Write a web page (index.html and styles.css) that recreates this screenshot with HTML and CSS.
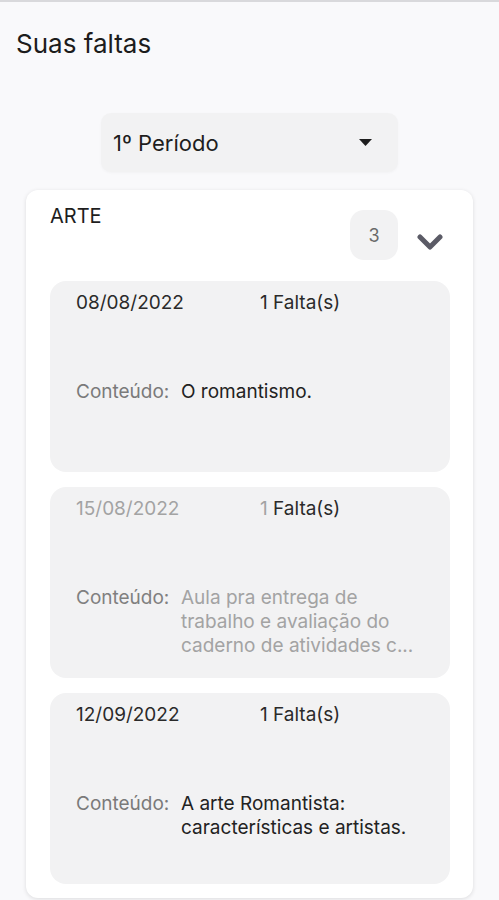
FILE: index.html
```html
<!DOCTYPE html>
<html lang="pt-BR">
<head>
    <meta charset="UTF-8">
    <meta name="viewport" content="width=device-width, initial-scale=1.0">
    <title>Suas faltas</title>
    <link rel="stylesheet" href="styles.css">
</head>
<body>
<div class="topbar"></div>
<h1 class="title">Suas faltas</h1>

<div class="select-wrap">
    <div class="select">
        <span>1º Período</span>
        <svg class="caret" width="13" height="7" viewBox="0 0 13 7"><path d="M0 0 L13 0 L6.5 7 Z" fill="#1e1e1e"/></svg>
    </div>
</div>

<div class="card">
    <div class="card-head">
        <div class="subject">ARTE</div>
        <div class="badge">3</div>
        <svg class="chevron" width="26" height="17" viewBox="0 0 26 17"><polyline points="3,3 13,13 23,3" fill="none" stroke="#5b5b66" stroke-width="5" stroke-linecap="round" stroke-linejoin="round"/></svg>
    </div>

    <div class="item">
        <div class="item-top">
            <span class="date">08/08/2022</span>
            <span class="count">1 Falta(s)</span>
        </div>
        <div class="content">
            <span class="label">Conteúdo:</span>
            <span class="value">O romantismo.</span>
        </div>
    </div>

    <div class="item fading">
        <div class="item-top">
            <span class="date">15/08/2022</span>
            <span class="count"><span class="num">1</span> Falta(s)</span>
        </div>
        <div class="content">
            <span class="label">Conteúdo:</span>
            <span class="value">Aula pra entrega de trabalho e avaliação do caderno de atividades c...</span>
        </div>
    </div>

    <div class="item">
        <div class="item-top">
            <span class="date">12/09/2022</span>
            <span class="count">1 Falta(s)</span>
        </div>
        <div class="content">
            <span class="label">Conteúdo:</span>
            <span class="value">A arte Romantista: características e artistas.</span>
        </div>
    </div>
</div>
</body>
</html>
```

FILE: styles.css
```css
body {
    margin: 0;
    background-color: #f9f9fb;
    font-family: Inter, "Noto Sans", sans-serif;
    color: #222;
    height: 900px;
    overflow: hidden;
}

.topbar {
    height: 2px;
    background-color: #d9d9dc;
}

.title {
    margin: 27px 0 0 16px;
    font-size: 26px;
    font-weight: 400;
    line-height: 30px;
    color: #1c1c1c;
}

.select-wrap {
    display: flex;
    justify-content: center;
    margin-top: 54px;
}

.select {
    width: 297px;
    height: 59px;
    box-sizing: border-box;
    padding: 0 26px 0 12px;
    display: flex;
    align-items: center;
    justify-content: space-between;
    background-color: #f2f2f3;
    border-radius: 10px;
    box-shadow: 0 1px 3px rgba(0, 0, 0, 0.03);
    font-size: 22px;
    color: #1e1e1e;
}

.card {
    margin: 18px 26px 0;
    padding: 14px 23px 14px 24px;
    background-color: #fff;
    border-radius: 12px;
    box-shadow: 0 1px 4px rgba(0, 0, 0, 0.12);
}

.card-head {
    display: flex;
    align-items: flex-start;
    height: 77px;
}

.subject {
    flex: 1;
    font-size: 20px;
    line-height: 24px;
    color: #1e1e1e;
}

.badge {
    width: 48px;
    height: 50px;
    margin-top: 6px;
    display: flex;
    justify-content: center;
    align-items: center;
    background-color: #f2f2f3;
    border-radius: 14px;
    font-size: 18px;
    color: #6a6a6a;
}

.chevron {
    margin: 30px 7px 0 19px;
}

.item {
    height: 191px;
    box-sizing: border-box;
    margin-bottom: 15px;
    padding: 10px 26px;
    background-color: #f2f2f3;
    border-radius: 16px;
}

.item:last-child {
    margin-bottom: 0;
}

.item-top {
    display: grid;
    grid-template-columns: 184px 1fr;
    font-size: 19px;
    line-height: 24px;
    color: #2a2a2a;
}

.content {
    display: grid;
    grid-template-columns: 105px 240px;
    margin-top: 65px;
    font-size: 19px;
    line-height: 24px;
}

.label {
    color: #7a7a7a;
}

.value {
    color: #222;
}

.fading .date,
.fading .num,
.fading .value {
    color: #a3a3a3;
}

.fading .label {
    color: #808080;
}
```
